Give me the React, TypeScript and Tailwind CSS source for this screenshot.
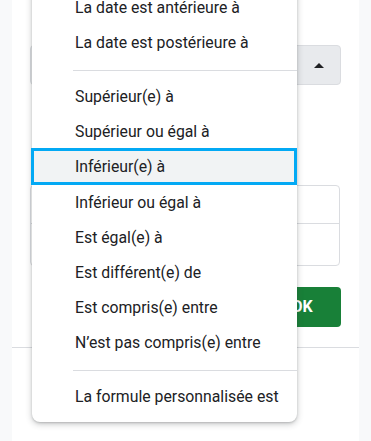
const groups: string[][] = [
  ['La date est antérieure à', 'La date est postérieure à'],
  [
    'Supérieur(e) à',
    'Supérieur ou égal à',
    'Inférieur(e) à',
    'Inférieur ou égal à',
    'Est égal(e) à',
    'Est différent(e) de',
    'Est compris(e) entre',
    'N’est pas compris(e) entre',
  ],
  ['La formule personnalisée est'],
]

const selected = 'Inférieur(e) à'

export default function App() {
  return (
    <div
      className="relative flex h-[441px] w-[371px] overflow-hidden bg-[#f8f9fa] px-3 text-[#202124]"
      style={{ fontFamily: 'Roboto, "Noto Sans", sans-serif' }}
    >
      {/* panel under the menu */}
      <div className="flex flex-1 flex-col bg-white">
        <div className="flex flex-col px-[18px] pt-[45px]">
          <div className="flex h-10 items-center justify-end rounded border border-[#dadce0] bg-[#e8eaed] pr-4">
            <svg width="10" height="5" viewBox="0 0 10 5" aria-hidden>
              <path d="M0 5 L5 0 L10 5 Z" fill="#202124" />
            </svg>
          </div>

          <div className="mt-[100px] mr-px flex flex-col rounded border border-[#dadce0]">
            <div className="h-[38px] border-b border-[#dadce0]" />
            <div className="h-[41px]" />
          </div>

          <div className="mt-[21px] flex justify-end">
            <button
              type="button"
              className="h-10 w-[78px] rounded bg-[#188038] text-base font-bold text-white"
            >
              OK
            </button>
          </div>
        </div>
        <div className="mt-5 border-t border-[#dadce0]" />
      </div>

      {/* condition menu */}
      <div className="absolute top-[-10px] left-8 w-[265px] rounded-b-lg bg-white pb-2 shadow-[0_2px_6px_rgba(60,64,67,0.3),0_1px_2px_rgba(60,64,67,0.2)]">
        {groups.map((items, gi) => (
          <div key={gi}>
            {gi > 0 && (
              <div className="mt-[10px] mb-2 ml-[41px] border-t border-[#dadce0]" />
            )}
            {items.map((label) =>
              label === selected ? (
                <div
                  key={label}
                  className="-mt-px -ml-px flex h-[37px] items-center bg-[#f1f3f4] pl-[44px] text-[15.8px] ring-[3px] ring-[#03a9f4] ring-inset"
                >
                  {label}
                </div>
              ) : (
                <div key={label} className="flex h-[35px] items-center pl-[43px] text-[15.8px]">
                  {label}
                </div>
              ),
            )}
          </div>
        ))}
      </div>
    </div>
  )
}
